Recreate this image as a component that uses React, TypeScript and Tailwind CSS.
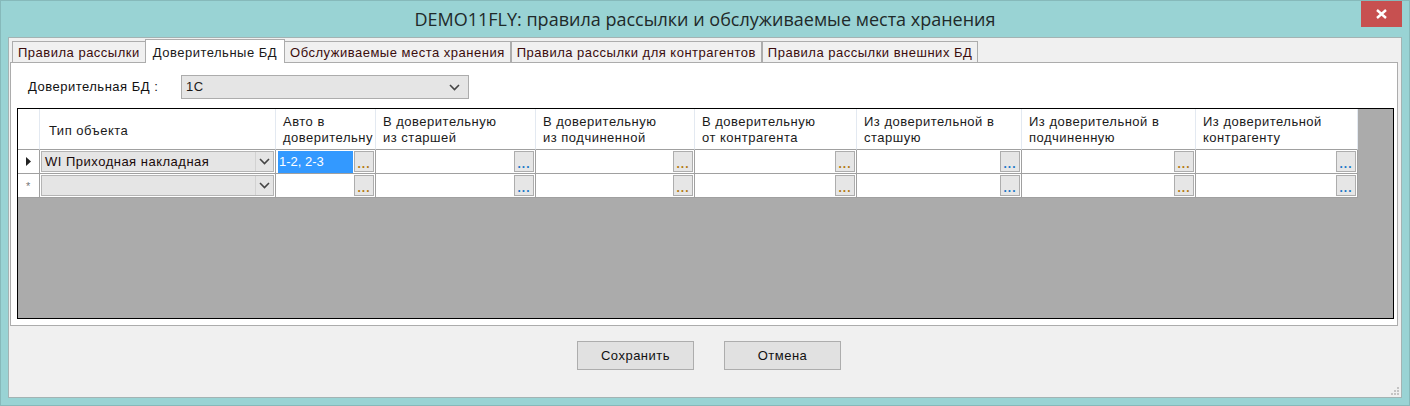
import React from "react";

interface Column {
  width: string;
  label: [string, string];
  dots: string;
}

const columns: Column[] = [
  { width: "w-[100px]", label: ["Авто в", "доверительну"], dots: "text-[#b37a12]" },
  { width: "w-[160px]", label: ["В доверительную", "из старшей"], dots: "text-[#1b78c8]" },
  { width: "w-[159px]", label: ["В доверительную", "из подчиненной"], dots: "text-[#b37a12]" },
  { width: "w-[162px]", label: ["В доверительную", "от контрагента"], dots: "text-[#b37a12]" },
  { width: "w-[165px]", label: ["Из доверительной в", "старшую"], dots: "text-[#1b78c8]" },
  { width: "w-[174px]", label: ["Из доверительной в", "подчиненную"], dots: "text-[#b37a12]" },
  { width: "w-[162px]", label: ["Из доверительной", "контрагенту"], dots: "text-[#1b78c8]" },
];

const tabs = [
  "Правила рассылки",
  "Доверительные БД",
  "Обслуживаемые места хранения",
  "Правила рассылки для контрагентов",
  "Правила рассылки внешних БД",
];

const Chevron: React.FC = () => (
  <svg width="11" height="7" viewBox="0 0 11 7">
    <path d="M1 1 L5.5 5.5 L10 1" fill="none" stroke="#444" strokeWidth="1.6" />
  </svg>
);

const DotsButton: React.FC<{ color: string }> = ({ color }) => (
  <div className="w-[20px] h-[21px] border border-[#adadad] bg-[#e6e6e6] flex items-end justify-center shrink-0">
    <span className={`text-[12px] font-bold leading-[10px] pb-[2px] tracking-[1px] ${color}`}>...</span>
  </div>
);

const App: React.FC = () => {
  return (
    <div className="w-[1410px] h-[406px] bg-[#99d3d4] border border-[#86b9ba] flex flex-col font-['Liberation_Sans',Arial,sans-serif] text-[13px] tracking-[0.5px] text-[#1a1a1a] overflow-hidden">
      {/* title bar */}
      <div className="relative h-[36px] shrink-0 flex items-center justify-center">
        <span className="font-['Open_Sans',sans-serif] text-[18px] tracking-normal text-[#1f2a2a]">
          DEMO11FLY: правила рассылки и обслуживаемые места хранения
        </span>
        <div className="absolute right-[7px] top-0 w-[41px] h-[26px] bg-[#c75050] flex items-center justify-center">
          <svg width="11" height="10" viewBox="0 0 11 10">
            <path d="M1 1 L10 9 M10 1 L1 9" stroke="#fff" strokeWidth="2.4" />
          </svg>
        </div>
      </div>

      {/* client area */}
      <div className="relative flex-1 mx-[7px] mb-[7px] bg-[#f0f0f0] border border-[#a3b3b3] flex flex-col pl-[1px] pr-[3px]">
        {/* tabs */}
        <div className="flex items-end h-[24px] pl-[2px]">
          {tabs.map((t, i) =>
            i === 1 ? (
              <div
                key={t}
                className="h-[24px] px-[7px] bg-white border border-b-0 border-[#acacac] -mb-[1px] relative z-10 flex items-start pt-[3px] -mx-[1px]"
              >
                {t}
              </div>
            ) : (
              <div
                key={t}
                className="h-[21px] px-[5px] bg-[#f0f0f0] border border-b-0 border-[#acacac] flex items-center text-[#3b0d0d] pt-[1px]"
              >
                {t}
              </div>
            )
          )}
        </div>

        {/* tab page */}
        <div className="h-[264px] bg-white border border-[#acacac] pl-[6px] pr-[3px] pt-[12px]">
          <div className="flex items-center h-[24px]">
            <span className="ml-[11px] w-[153px] text-[#111]">Доверительная БД :</span>
            <div className="w-[288px] h-[24px] border border-[#acacac] bg-[#e5e5e5] flex items-center justify-between pl-[4px] pr-[8px]">
              <span>1C</span>
              <Chevron />
            </div>
          </div>

          {/* grid */}
          <div className="mt-[9px] h-[211px] border border-black bg-[#ababab] flex flex-col">
            {/* header */}
            <div className="flex h-[41px] shrink-0">
              <div className="w-[22px] bg-white border-r border-[#e3e9f1] border-b border-b-[#a0a0a0]" />
              <div className="w-[236px] bg-white border-r border-[#e3e9f1] border-b border-b-[#a0a0a0] flex items-center pl-[9px] pt-[3px]">
                Тип объекта
              </div>
              {columns.map((c) => (
                <div
                  key={c.label.join(" ")}
                  className={`${c.width} bg-white border-r border-[#e3e9f1] border-b border-b-[#a0a0a0] pl-[7px] pt-[5px] leading-[16px] whitespace-nowrap overflow-hidden`}
                >
                  <div>{c.label[0]}</div>
                  <div>{c.label[1]}</div>
                </div>
              ))}
            </div>

            {/* rows */}
            {[0, 1].map((r) => (
              <div key={r} className="flex h-[24px] shrink-0">
                <div className="w-[22px] bg-white border-r border-b border-[#a0a0a0] flex items-center justify-center">
                  {r === 0 ? (
                    <svg width="6" height="9" viewBox="0 0 6 9">
                      <path d="M0 0 L5 4.5 L0 9 Z" fill="#222" />
                    </svg>
                  ) : (
                    <span className="text-[#777] text-[11px] leading-none pt-[2px]">*</span>
                  )}
                </div>
                <div className="w-[236px] bg-white border-r border-b border-[#a0a0a0] p-[1px]">
                  <div className="h-full border border-[#b4b4b4] bg-[#e5e5e5] flex items-center">
                    <span className="flex-1 pl-[3px] text-[#1a0a0a] whitespace-nowrap">
                      {r === 0 ? "WI Приходная накладная" : ""}
                    </span>
                    <div className="w-[18px] h-full border-l border-[#d2d2d2] flex items-center justify-center">
                      <Chevron />
                    </div>
                  </div>
                </div>
                {columns.map((c, ci) => (
                  <div
                    key={c.label.join(" ")}
                    className={`${c.width} bg-white border-r border-b border-[#a0a0a0] flex items-center justify-between pl-[2px] pr-[1px]`}
                  >
                    {r === 0 && ci === 0 ? (
                      <span className="flex-1 h-[22px] bg-[#3399ff] text-white flex items-center pl-[1px] mr-[1px] tracking-normal">
                        1-2, 2-3
                      </span>
                    ) : (
                      <span />
                    )}
                    <DotsButton color={c.dots} />
                  </div>
                ))}
              </div>
            ))}
          </div>
        </div>

        {/* buttons */}
        <div className="flex justify-center gap-[30px] pt-[15px] pl-[10px]">
          <button className="w-[117px] h-[29px] bg-[#e1e1e1] border border-[#adadad] text-[#111]">
            Сохранить
          </button>
          <button className="w-[117px] h-[29px] bg-[#e1e1e1] border border-[#adadad] text-[#111]">
            Отмена
          </button>
        </div>

        {/* resize grip */}
        <svg className="absolute right-[1px] bottom-[1px]" width="9" height="9" viewBox="0 0 9 9">
          <rect x="6" y="0" width="2" height="2" fill="#c4c4c4" />
          <rect x="3" y="3" width="2" height="2" fill="#c4c4c4" />
          <rect x="6" y="3" width="2" height="2" fill="#c4c4c4" />
          <rect x="0" y="6" width="2" height="2" fill="#c4c4c4" />
          <rect x="3" y="6" width="2" height="2" fill="#c4c4c4" />
          <rect x="6" y="6" width="2" height="2" fill="#c4c4c4" />
        </svg>
      </div>
    </div>
  );
};

export default App;
